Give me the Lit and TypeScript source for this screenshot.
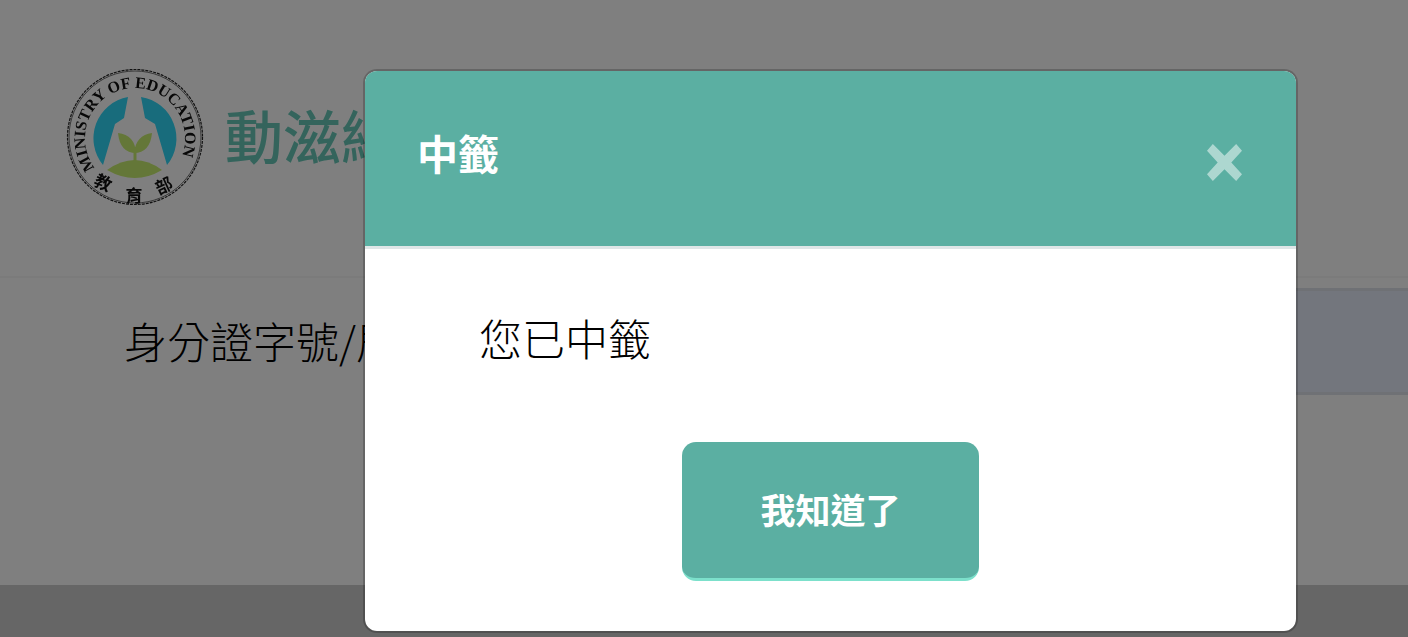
import { LitElement, html, css, svg } from "lit";
import { customElement } from "lit/decorators.js";

const logo = svg`
  <svg class="logo" viewBox="0 0 140 140" width="140" height="140" aria-hidden="true">
    <circle cx="70" cy="70" r="67.5" fill="none" stroke="#222" stroke-width="1.2" stroke-dasharray="3 1"/>
    <circle cx="70" cy="70" r="66" fill="none" stroke="#333" stroke-width="0.7"/>
    <path d="M63 30A42 42 0 0 0 38 98L50 57L59 51Z" fill="#30d8f8"/>
    <path d="M76 30A42 42 0 0 1 102 98L90 57L80 51Z" fill="#30d8f8"/>
    <path d="M42 103Q70 83 97 103Q70 119 42 103Z" fill="#c8ee70"/>
    <path d="M53 66Q70 68 71 86Q55 86 53 66Z" fill="#c8ee70"/>
    <path d="M87 66Q71 68 69 86Q85 86 87 66Z" fill="#c8ee70"/>
    <path d="M70 80V96" stroke="#c8ee70" stroke-width="3"/>
    <path id="ring" d="M30 101A50 50 0 1 1 110 101" fill="none"/>
    <text class="ring-text"><textPath href="#ring" textLength="207" lengthAdjust="spacing">MINISTRY OF EDUCATION</textPath></text>
    <text class="seal" x="38" y="122" transform="rotate(25 38 116)">教</text>
    <text class="seal" x="69" y="135">育</text>
    <text class="seal" x="99" y="125" transform="rotate(-25 99 119)">部</text>
  </svg>
`;

@customElement("app-root")
export class AppRoot extends LitElement {
  static styles = css`
    :host {
      display: block;
      width: 1408px;
      height: 637px;
      overflow: hidden;
      position: relative;
      font-family: "Noto Sans CJK TC", "Noto Sans", sans-serif;
      background: #fff;
    }
    .page {
      height: 637px;
      display: flex;
      flex-direction: column;
    }
    .top {
      height: 278px;
      border-bottom: 2px solid #f6f6f6;
      display: flex;
      align-items: flex-start;
      padding-left: 65px;
      gap: 20px;
      flex: none;
      box-sizing: border-box;
    }
    .logo {
      margin-top: 67px;
      flex: none;
      filter: blur(0.6px);
    }
    .ring-text {
      font: bold 16px "Liberation Serif", serif;
      fill: #111;
    }
    .seal {
      font: bold 17px "Noto Sans CJK TC", sans-serif;
      fill: #111;
      text-anchor: middle;
    }
    .brand {
      margin: 92px 0 0;
      font-size: 58px;
      line-height: 84px;
      font-weight: 500;
      color: #68c8b8;
      white-space: nowrap;
      filter: blur(0.5px);
    }
    .row {
      flex: none;
      display: flex;
      align-items: center;
      height: 107px;
      margin-top: 10px;
      padding-left: 124px;
    }
    .label {
      flex: none;
      width: 480px;
      font-size: 43px;
      font-weight: 300;
      line-height: 64px;
      color: #000;
      white-space: nowrap;
      position: relative;
      top: -2px;
    }
    .input {
      flex: 1;
      align-self: stretch;
      background: #e6edfa;
      border-top: 3px solid #dfe3ea;
      border-bottom: 3px solid #dfe3ea;
    }
    .spacer {
      flex: 1;
    }
    .footer {
      flex: none;
      height: 52px;
      background: #cdcdcd;
    }
    .overlay {
      position: absolute;
      inset: 0;
      background: rgba(0, 0, 0, 0.5);
      display: flex;
      justify-content: flex-start;
      align-items: flex-start;
      padding: 69px 0 0 363px;
      box-sizing: border-box;
    }
    .dialog {
      width: 935px;
      height: 564px;
      box-sizing: border-box;
      border: 2px solid rgba(0, 0, 0, 0.2);
      border-radius: 14px;
      background: #fff;
      background-clip: padding-box;
      display: flex;
      flex-direction: column;
      overflow: hidden;
    }
    .head {
      flex: none;
      height: 178px;
      box-sizing: border-box;
      background: #5bafa2;
      border-bottom: 3px solid #dfe6e7;
      display: flex;
      justify-content: space-between;
      align-items: flex-start;
      padding: 49px 54px 0 52px;
    }
    .title {
      margin: 0;
      font-size: 41px;
      line-height: 64px;
      font-weight: 700;
      color: #fff;
    }
    .close {
      all: unset;
      display: flex;
      margin-top: 24px;
      opacity: 0.5;
    }
    .body {
      flex: 1;
      display: flex;
      flex-direction: column;
      padding: 56px 0 0 114px;
    }
    .msg {
      margin: 0;
      font-size: 43px;
      line-height: 64px;
      font-weight: 300;
      color: #000;
    }
    .btn {
      all: unset;
      box-sizing: border-box;
      width: 297px;
      height: 139px;
      margin: 73px 0 0 203px;
      padding-bottom: 3px;
      display: flex;
      align-items: center;
      justify-content: center;
      background: #5bafa2;
      border-bottom: 3px solid #7ce0cb;
      border-radius: 14px;
      color: #fff;
      font-size: 35px;
      font-weight: 700;
      line-height: 50px;
    }
  `;

  render() {
    return html`
      <div class="page">
        <header class="top">
          ${logo}
          <h1 class="brand">動滋網</h1>
        </header>
        <div class="row">
          <div class="label">身分證字號/居留證號</div>
          <div class="input"></div>
        </div>
        <div class="spacer"></div>
        <footer class="footer"></footer>
      </div>
      <div class="overlay">
        <section class="dialog" role="dialog">
          <div class="head">
            <h2 class="title">中籤</h2>
            <button class="close" aria-label="關閉">
              <svg width="35" height="37" viewBox="0 0 36 38" aria-hidden="true">
                <path d="M0 7L6 0L18 12L30 0L36 7L25 19L36 31L30 38L18 26L6 38L0 31L11 19Z" fill="#fff"/>
              </svg>
            </button>
          </div>
          <div class="body">
            <p class="msg">您已中籤</p>
            <button class="btn">我知道了</button>
          </div>
        </section>
      </div>
    `;
  }
}
